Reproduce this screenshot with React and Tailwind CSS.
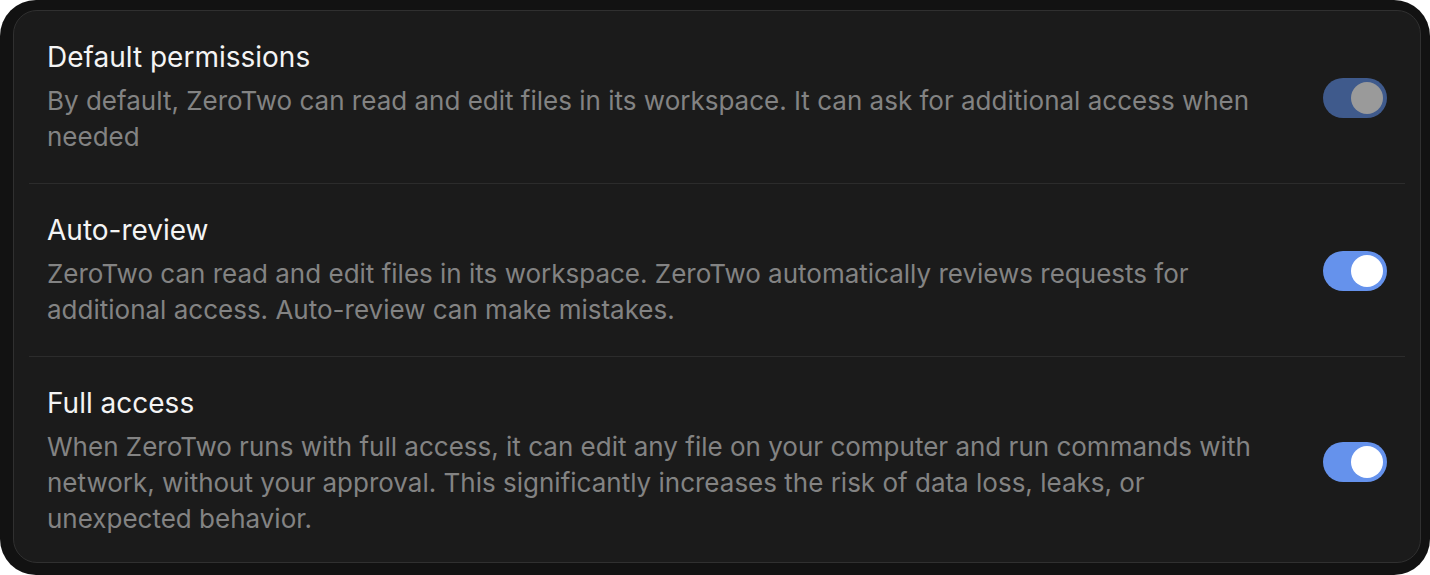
import React, { useState } from 'react';

const rows = [
    {
        title: 'Default permissions',
        desc: 'By default, ZeroTwo can read and edit files in its workspace. It can ask for additional access when needed',
        on: true,
        disabled: true,
    },
    {
        title: 'Auto-review',
        desc: 'ZeroTwo can read and edit files in its workspace. ZeroTwo automatically reviews requests for additional access. Auto-review can make mistakes.',
        on: true,
    },
    {
        title: 'Full access',
        desc: 'When ZeroTwo runs with full access, it can edit any file on your computer and run commands with network, without your approval. This significantly increases the risk of data loss, leaks, or unexpected behavior.',
        on: true,
    },
];

const Toggle = ({ on, disabled, onClick }) => (
    <button
        onClick={disabled ? undefined : onClick}
        className={`shrink-0 w-16 h-10 rounded-full p-1 flex items-center ${
            disabled ? 'bg-[#3f5a8c]' : on ? 'bg-[#6592ec]' : 'bg-[#3a3a3a]'
        } ${on ? 'justify-end' : 'justify-start'}`}
    >
        <span className={`block w-8 h-8 rounded-full ${disabled ? 'bg-[#9a9a9a]' : 'bg-white'}`} />
    </button>
);

const App = () => {
    const [state, setState] = useState(rows.map((r) => r.on));

    return (
        <div className="w-[1430px] h-[575px] bg-white" style={{ fontFamily: 'Inter, "Noto Sans", sans-serif' }}>
            <div className="w-full h-full rounded-[36px] bg-[#121212] pt-[10px] pl-[13px] pr-[9px] pb-[12px]">
                <div className="h-full rounded-[24px] border border-[#303030] bg-[#1b1b1b] px-[15px]">
                    {rows.map((row, i) => (
                        <div
                            key={row.title}
                            className={`flex items-center gap-12 pl-[18px] pr-[18px] pt-[30px] pb-[28px] ${
                                i < rows.length - 1 ? 'border-b border-[#2c2c2c]' : ''
                            }`}
                        >
                            <div className="flex-1 flex flex-col gap-[10px]">
                                <h3 className="text-[28px] leading-[32px] text-[#f4f4f4] font-normal">{row.title}</h3>
                                <p className="text-[26px] leading-[36px] text-[#838383]">{row.desc}</p>
                            </div>
                            <Toggle
                                on={state[i]}
                                disabled={row.disabled}
                                onClick={() => setState((s) => s.map((v, j) => (j === i ? !v : v)))}
                            />
                        </div>
                    ))}
                </div>
            </div>
        </div>
    );
};

export default App;
